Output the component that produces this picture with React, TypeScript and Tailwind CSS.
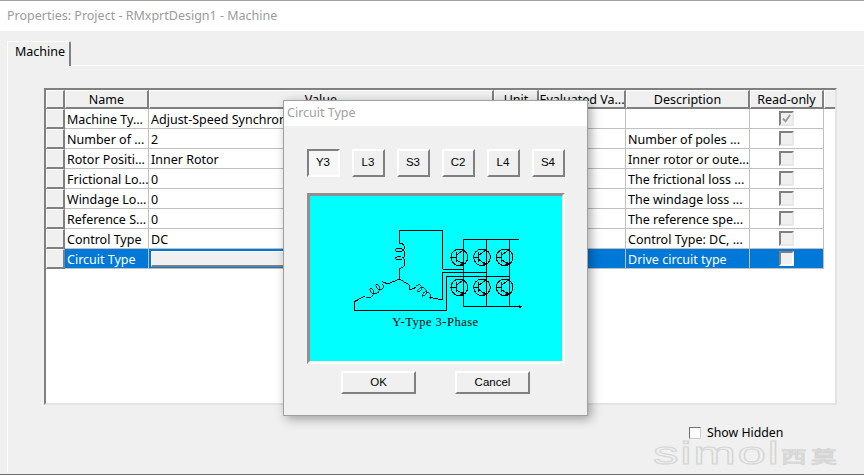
const rows = [
  { name: "Machine Ty...", value: "Adjust-Speed Synchronous Machine", desc: "", checked: true },
  { name: "Number of ...", value: "2", desc: "Number of poles ..." },
  { name: "Rotor Positi...", value: "Inner Rotor", desc: "Inner rotor or oute..." },
  { name: "Frictional Lo...", value: "0", desc: "The frictional loss ..." },
  { name: "Windage Lo...", value: "0", desc: "The windage loss ..." },
  { name: "Reference S...", value: "0", desc: "The reference spe..." },
  { name: "Control Type", value: "DC", desc: "Control Type: DC, ..." },
  { name: "Circuit Type", value: "", desc: "Drive circuit type", selected: true },
];

const headers = ["Name", "Value", "Unit", "Evaluated Va...", "Description", "Read-only"];
const circuits = ["Y3", "L3", "S3", "C2", "L4", "S4"];

function Transistor({ cx, cy }: { cx: number; cy: number }) {
  return (
    <g>
      <circle cx={cx} cy={cy} r={25} />
      <path d={`M${cx - 27} ${cy}H${cx - 10}M${cx - 10} ${cy - 15}V${cy + 15}M${cx - 10} ${cy - 6}L${cx + 12} ${cy - 22}M${cx - 10} ${cy + 6}L${cx + 12} ${cy + 22}`} />
      <path d={`M${cx + 12} ${cy + 22}l-8 -1l4 -6z`} fill="#000" />
    </g>
  );
}

const coil = "M0 0C20 0 20 25 0 25C-15 25 -15 15 0 15C22 15 22 50 0 50C-15 50 -15 40 0 40C22 40 22 75 0 75";

function CircuitDrawing() {
  return (
    <svg viewBox="0 0 570 312" className="w-[190px] h-[104px]" fill="none" stroke="#000" strokeWidth={3} shapeRendering="crispEdges">
      {/* windings */}
      <path d="M305 178V60H175V100" />
      <g transform="translate(175 100)"><path d={coil} /></g>
      <path d="M175 175V207L140 222L122 214" />
      <g transform="translate(125 222) rotate(57) scale(0.85)"><path d={coil} /></g>
      <path d="M72 258L40 275V300H315V198H505" />
      <path d="M175 207L205 225V240L226 232" />
      <g transform="translate(226 228) rotate(-45) scale(0.75)"><path d={coil} /></g>
      <path d="M265 262L305 270V188H437" />
      <path d="M305 178H368" />
      {/* bridge rails */}
      <path d="M533 88H367V290H535M437 88V290M505 88V290" />
      <path d="M535 287l6 3l-6 3z" fill="#000" />
      {[355, 423, 491].map((cx) => (
        <g key={cx}>
          <Transistor cx={cx} cy={142} />
          <Transistor cx={cx} cy={232} />
        </g>
      ))}
    </svg>
  );
}

function CheckBox({ checked, selected }: { checked?: boolean; selected?: boolean }) {
  return (
    <div className={`w-[15px] h-[15px] border-2 border-t-[#808080] border-l-[#808080] bg-[#f0f0f0] flex items-center justify-center ${selected ? "border-r-white border-b-white" : "border-r-[#e8e8e8] border-b-[#e8e8e8]"}`}>
      {checked && (
        <svg viewBox="0 0 12 12" className="w-[11px] h-[11px]" fill="none" stroke="#9a9a9a" strokeWidth={2}>
          <path d="M2 6l3 3l5-7" />
        </svg>
      )}
    </div>
  );
}

export default function App() {
  return (
    <div className="relative w-[864px] h-[475px] overflow-hidden bg-[#f0f0f0] flex flex-col border-t border-[#a0a0a0] font-['Noto_Sans',sans-serif] text-[12.5px] text-black">
      {/* Title bar */}
      <div className="h-[30px] bg-white flex items-center pl-[7px] text-[12.5px] text-[#9b9b9b]">
        Properties: Project - RMxprtDesign1 - Machine
      </div>

      {/* Tab strip and page */}
      <div className="flex-1 flex flex-col pt-[10px] pl-[7px] pb-[2px] border-b border-[#6b6b6b]">
        <div className="w-[64px] h-[25px] bg-[#f0f0f0] border-t border-l border-white border-r-2 border-r-[#808080] rounded-tr-[2px] flex items-center pl-[7px] pb-[4px] z-10 -mb-px shrink-0">
          Machine
        </div>
        <div className="flex-1 border-t border-l border-white pt-[22px] pl-[36px] flex flex-col">
          {/* Grid */}
          <div className="w-[793px] h-[317px] bg-white border-t-2 border-l-2 border-t-[#808080] border-l-[#808080] border-r-2 border-b-2 border-r-[#e4e4e4] border-b-[#e4e4e4] overflow-hidden">
            <div className="grid grid-cols-[19px_84px_345px_45px_87px_124px_74px_13px] grid-rows-[19px] auto-rows-[20px]">
              <div className="bg-[#f0f0f0] border-r-2 border-b-2 border-[#808080] border-l border-l-white border-t border-t-white" />
              {headers.map((h) => (
                <div key={h} className="bg-[#f0f0f0] border-r-2 border-b-2 border-[#808080] border-l border-l-white border-t border-t-white flex items-center justify-center whitespace-nowrap overflow-hidden leading-none pt-[2px]">
                  {h}
                </div>
              ))}
              <div className="bg-[#f0f0f0] border-r-2 border-b-2 border-[#808080] border-l border-l-white border-t border-t-white" />
              {rows.map((r) => {
                const cell = `border-r border-b border-[#c0c0c0] flex px-[2px] whitespace-nowrap overflow-hidden leading-[16px] ${r.selected ? "bg-[#0078d7] text-white" : "bg-white"}`;
                return (
                  <div key={r.name} className="contents">
                    <div className="bg-[#f0f0f0] border-r-2 border-b-2 border-[#808080] border-l border-l-white border-t border-t-white" />
                    <div className={`${cell} items-start pt-[3px]`}>{r.name}</div>
                    <div className={`${cell} items-start pt-[3px]`}>
                      {r.selected ? (
                        <div className="w-full h-[16px] -mt-[1px] bg-[#f0f0f0] border-t border-l border-white border-r border-b-2 border-r-[#808080] border-b-[#808080]" />
                      ) : (
                        r.value
                      )}
                    </div>
                    <div className={cell} />
                    <div className={cell} />
                    <div className={`${cell} items-start pt-[3px]`}>{r.desc}</div>
                    <div className={`${cell} items-center justify-center`}>
                      <CheckBox checked={r.checked} selected={r.selected} />
                    </div>
                    <div />
                  </div>
                );
              })}
            </div>
          </div>

          {/* Show hidden */}
          <div className="flex items-center mt-[19px] ml-[645px] gap-[6px] text-[12.3px]">
            <div className="w-[12px] h-[12px] bg-white border-t border-l border-[#707070] border-r border-b border-r-[#d0d0d0] border-b-[#d0d0d0]" />
            <span>Show Hidden</span>
          </div>
        </div>
      </div>

      {/* Watermark */}
      <div className="absolute left-[653px] top-[437px] flex items-end text-transparent [-webkit-text-stroke:1px_#d6d6d6] select-none">
        <span className="inline-block font-['Liberation_Sans',sans-serif] text-[32px] leading-[30px] tracking-[1px] origin-left scale-x-[1.6] w-[128px]">simol</span>
        <span className="inline-block font-['Noto_Sans_CJK_SC',sans-serif] text-[17px] leading-[24px] tracking-[3px] origin-left scale-x-[1.5] w-[40px]">西莫</span>
      </div>

      {/* Circuit Type dialog */}
      <div className="absolute left-[283px] top-[99px] w-[305px] h-[316px] bg-[#f0f0f0] border border-[#a0a0a0] shadow-[3px_3px_10px_rgba(0,0,0,0.35)] flex flex-col items-center">
        <div className="w-full h-[25px] bg-white flex items-center pl-[3px] text-[12.5px] text-[#a0a0a0] shrink-0">
          Circuit Type
        </div>
        <div className="w-[258px] flex justify-between mt-[23px] font-['Liberation_Sans',sans-serif] text-[11.5px]">
          {circuits.map((c, i) => (
            <div
              key={c}
              className={`w-[33px] h-[28px] flex items-center justify-center border-2 ${
                i === 0
                  ? "border-t-[#808080] border-l-[#808080] border-r-white border-b-white bg-[#f7f7f7]"
                  : "border-t-white border-l-white border-r-[#808080] border-b-[#808080]"
              }`}
            >
              {c}
            </div>
          ))}
        </div>
        <div className="w-[258px] h-[171px] mt-[16px] bg-[#00ffff] border-[3px] border-t-[#909090] border-l-[#909090] border-r-white border-b-white flex flex-col items-center pt-[14px]">
          <CircuitDrawing />
          <span className="font-['Liberation_Serif',serif] text-[12.5px] leading-[16px] tracking-[0.5px]">Y-Type 3-Phase</span>
        </div>
        <div className="flex gap-[39px] mt-[7px] font-['Liberation_Sans',sans-serif] text-[11.5px]">
          <div className="w-[75px] h-[23px] flex items-center justify-center border-2 border-t-white border-l-white border-r-[#808080] border-b-[#808080]">OK</div>
          <div className="w-[75px] h-[23px] flex items-center justify-center border-2 border-t-white border-l-white border-r-[#808080] border-b-[#808080]">Cancel</div>
        </div>
      </div>
    </div>
  );
}
